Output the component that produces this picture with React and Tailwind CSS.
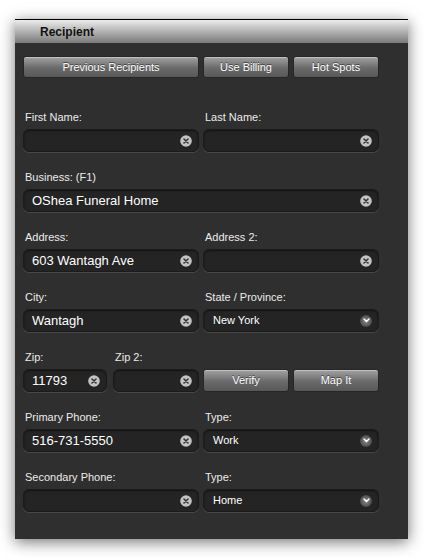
import React from "react";

const font = { fontFamily: '"Liberation Sans", Arial, sans-serif' };

function ClearIcon() {
  return (
    <svg width="12" height="12" viewBox="0 0 12 12" className="shrink-0">
      <circle cx="6" cy="6" r="5.8" fill="#c4c4c4" />
      <path d="M4 4 L8 8 M8 4 L4 8" stroke="#333" strokeWidth="1.6" strokeLinecap="round" />
    </svg>
  );
}

function Chevron() {
  return (
    <div className="w-[12px] h-[12px] rounded-full bg-[radial-gradient(circle,#8a8a8a_0%,#5a5a5a_55%,rgba(40,40,40,0)_100%)] flex items-center justify-center shrink-0">
      <svg width="7" height="5" viewBox="0 0 7 5">
        <path d="M1 1 L3.5 3.6 L6 1" stroke="#fff" strokeWidth="1.4" fill="none" strokeLinecap="round" />
      </svg>
    </div>
  );
}

function Field({ label, value, className = "" }) {
  return (
    <div className={`flex flex-col ${className}`}>
      <div className="h-[14px] text-[11px] leading-[14px] text-[#ececec] pl-[2px] mb-[5px] whitespace-nowrap">{label}</div>
      <div className="h-[23px] rounded-[6px] bg-[#242424] border border-[#1b1b1b] shadow-[0_1px_0_#474747,inset_0_1px_2px_rgba(0,0,0,0.5)] flex items-center pl-[8px] pr-[6px]">
        <span className="flex-1 text-[13px] text-white truncate">{value}</span>
        <ClearIcon />
      </div>
    </div>
  );
}

function Select({ label, value, className = "" }) {
  return (
    <div className={`flex flex-col ${className}`}>
      <div className="h-[14px] text-[11px] leading-[14px] text-[#ececec] pl-[2px] mb-[5px]">{label}</div>
      <div className="h-[23px] rounded-[6px] bg-[#242424] border border-[#1b1b1b] shadow-[0_1px_0_#474747,inset_0_1px_2px_rgba(0,0,0,0.5)] flex items-center pl-[9px] pr-[6px]">
        <span className="flex-1 text-[11px] text-white">{value}</span>
        <Chevron />
      </div>
    </div>
  );
}

function Button({ children, className = "" }) {
  return (
    <button className={`h-[22px] rounded-[3px] border border-[#262626] bg-[linear-gradient(#a2a2a2,#6a6a6a_55%,#585858)] shadow-[inset_0_1px_0_rgba(255,255,255,0.35)] text-[11px] text-white [text-shadow:0_-1px_0_rgba(0,0,0,0.5)] ${className}`}>
      {children}
    </button>
  );
}

export default function App() {
  return (
    <div className="w-[425px] h-[557px] bg-white overflow-hidden pt-[19px] pl-[15px]" style={font}>
      <div className="w-[393px] h-[520px] bg-[#2f2f2f] shadow-[0_3px_14px_rgba(0,0,0,0.55)] flex flex-col">
        {/* Header */}
        <div className="h-[24px] border-t border-black bg-[linear-gradient(#ececec,#b8b8b8_45%,#7a7a7a)] flex items-center pl-[25px]">
          <span className="text-[12px] font-bold text-[#111]">Recipient</span>
        </div>

        <div className="px-[8px] pt-[13px] flex flex-col">
          <div className="flex gap-[4px]">
            <Button className="w-[176px]">Previous Recipients</Button>
            <Button className="w-[86px]">Use Billing</Button>
            <Button className="w-[86px]">Hot Spots</Button>
          </div>

          <div className="mt-[32px] flex flex-col gap-[18px] w-[356px]">
            <div className="flex gap-[4px]">
              <Field label="First Name:" value="" className="w-[176px]" />
              <Field label="Last Name:" value="" className="w-[176px]" />
            </div>
            <Field label="Business: (F1)" value="OShea Funeral Home" />
            <div className="flex gap-[4px]">
              <Field label="Address:" value="603 Wantagh Ave" className="w-[176px]" />
              <Field label="Address 2:" value="" className="w-[176px]" />
            </div>
            <div className="flex gap-[4px]">
              <Field label="City:" value="Wantagh" className="w-[176px]" />
              <Select label="State / Province:" value="New York" className="w-[176px]" />
            </div>
            <div className="flex gap-[4px] items-end">
              <div className="flex gap-[6px] w-[176px]">
                <Field label="Zip:" value="11793" className="w-[84px]" />
                <Field label="Zip 2:" value="" className="w-[86px]" />
              </div>
              <Button className="w-[86px] h-[23px]">Verify</Button>
              <Button className="w-[86px] h-[23px]">Map It</Button>
            </div>
            <div className="flex gap-[4px]">
              <Field label="Primary Phone:" value="516-731-5550" className="w-[176px]" />
              <Select label="Type:" value="Work" className="w-[176px]" />
            </div>
            <div className="flex gap-[4px]">
              <Field label="Secondary Phone:" value="" className="w-[176px]" />
              <Select label="Type:" value="Home" className="w-[176px]" />
            </div>
          </div>
        </div>
      </div>
    </div>
  );
}
